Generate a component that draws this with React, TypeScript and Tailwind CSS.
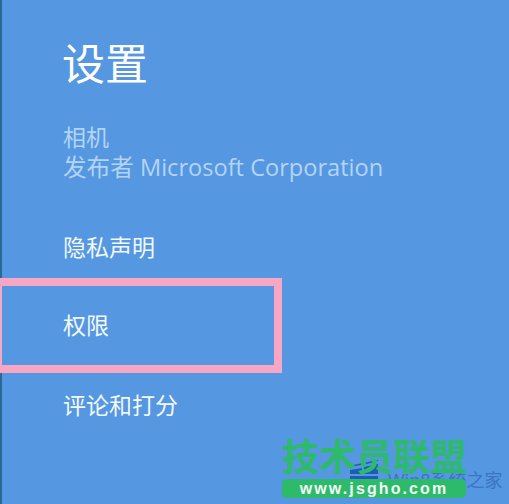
import React from "react";

const CJK = "font-['Open_Sans','Noto_Sans_CJK_SC',sans-serif]";

const Watermark: React.FC = () => (
  <div className="absolute left-[282px] top-[436px] w-[227px] h-[68px]">
    {/* faint site logo underneath */}
    <svg className="absolute left-[65px] top-[24px]" width="33" height="24" viewBox="0 0 33 24">
      <path d="M3 10 L15 8 L15 14 L3 14 Z M17 7 L31 4 L31 14 L17 14 Z M3 16 H31 V24 H3 Z" fill="#1f5cb8" />
      <path d="M5 6 L20 3 M17 4 L31 0" stroke="#1f5cb8" strokeWidth="1.5" fill="none" />
    </svg>
    <div className="absolute left-[106px] top-[33px] text-[#3a74c2] text-[18px] leading-[22px] whitespace-nowrap">
      Win8系统之家
    </div>
    <div className="absolute left-0 top-[-1px] text-[#2dba6b] text-[37px] leading-[44px] font-bold whitespace-nowrap">
      技术员联盟
    </div>
    <div className="absolute left-0 top-[43px] w-[184px] h-[19px] rounded-[5px] bg-[#2dba6b] flex items-center justify-center">
      <span className="font-['Liberation_Sans',sans-serif] font-bold text-[#f4fbf6] text-[16px] leading-none tracking-[2.1px]">
        www.jsgho.com
      </span>
    </div>
  </div>
);

const App: React.FC = () => {
  return (
    <div className={`relative w-[509px] h-[504px] overflow-hidden bg-[#5597e0] ${CJK}`}>
      <div className="absolute left-0 top-0 bottom-0 w-[2px] bg-[#2c6a96]" />
      <div className="flex flex-col pt-[36px]">
        <h1 className="pl-[62px] text-white text-[43px] leading-[56px] font-normal">设置</h1>
        <div className="pl-[63px] mt-[30px] text-[#b3d4f5] text-[23px] leading-[30px]">
          <div>相机</div>
          <div className="whitespace-nowrap text-[23.6px]">发布者 Microsoft Corporation</div>
        </div>
        <div className="pl-[63px] mt-[50px] text-[#f2f8fe] text-[23px] leading-[31px]">隐私声明</div>
        <div className="relative mt-[15px] w-[282px] h-[95px] border-y-[8px] border-r-[8px] border-l-[2px] border-[#f7a6c4] flex items-center pl-[61px] text-[#f2f8fe] text-[23px]">
          权限
        </div>
        <div className="pl-[63px] mt-[17px] text-[#f2f8fe] text-[23px] leading-[31px]">评论和打分</div>
      </div>
      <Watermark />
    </div>
  );
};

export default App;
